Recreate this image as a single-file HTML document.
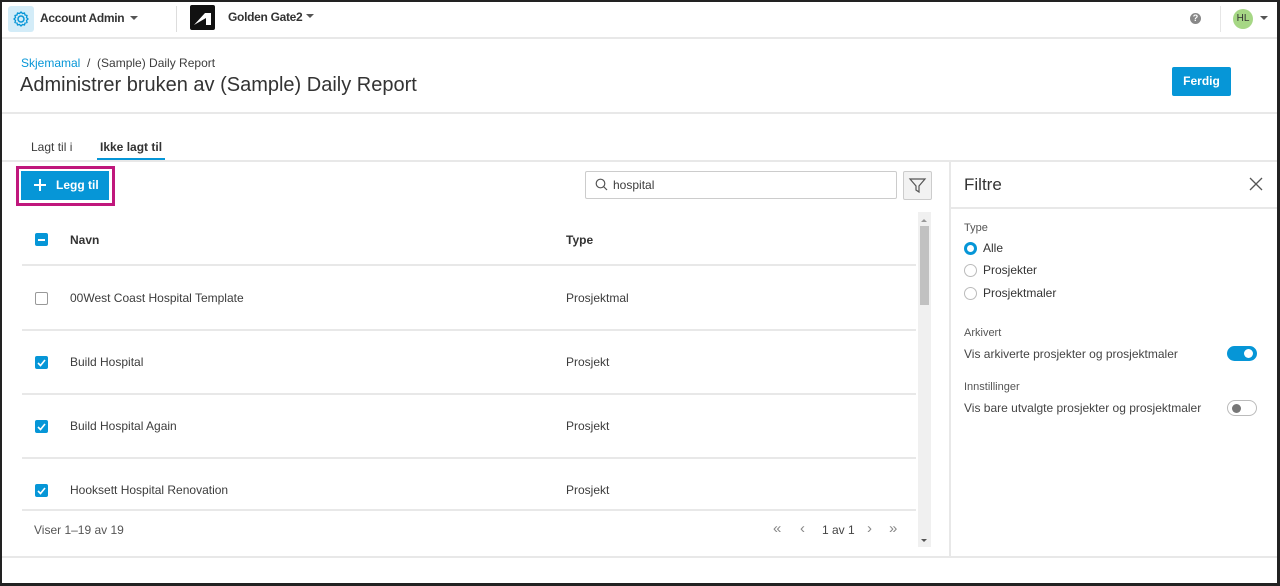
<!DOCTYPE html><html><head><style>
*{box-sizing:border-box;margin:0;padding:0}
body{width:1280px;height:586px;overflow:hidden;font-family:"Liberation Sans",sans-serif;color:#3c3c3c;background:#fff;position:relative;font-size:12px}
.a{position:absolute}
.frame{position:absolute;left:0;top:0;width:1280px;height:586px;border:2px solid #222;border-right-width:3px;border-bottom-width:3px;pointer-events:none}
.hl{position:absolute;height:2px;background:#e8e8e8}
.cb{position:absolute;width:13px;height:13px;border-radius:2px}
.on{background:#0696d7}
.off{border:1px solid #999;background:#fff}
.row{position:absolute;left:70px;font-size:12px;color:#3c3c3c}
</style></head><body>
<div class="a" style="left:8px;top:6px;width:26px;height:26px;background:#d3ecf8;border-radius:3px"></div>
<svg class="a" style="left:12px;top:10px" width="18" height="18" viewBox="0 0 18 18"><circle cx="9" cy="9" r="3" fill="none" stroke="#0696d7" stroke-width="1.5"/><path d="M9 2l1.5 1.5 2-.5.5 2 2 .5-.5 2L16 9l-1.5 1.5.5 2-2 .5-.5 2-2-.5L9 16l-1.5-1.5-2 .5-.5-2-2-.5.5-2L2 9l1.5-1.5-.5-2 2-.5.5-2 2 .5z" fill="none" stroke="#0696d7" stroke-width="1.3"/></svg>
<div class="a" style="left:40px;top:11px;font-size:12px;font-weight:bold;color:#333;letter-spacing:-0.3px">Account Admin</div>
<div class="a" style="left:130px;top:16px;border:4px solid transparent;border-top:4px solid #555"></div>
<div class="a" style="left:176px;top:6px;width:1px;height:26px;background:#ddd"></div>
<div class="a" style="left:190px;top:5px;width:25px;height:25px;background:#111;border-radius:2px"></div>
<svg class="a" style="left:190px;top:5px" width="25" height="25"><path d="M4 20L15 8h6v12h-5v-7z" fill="#fff"/></svg>
<div class="a" style="left:228px;top:10px;font-size:12px;font-weight:bold;color:#333;letter-spacing:-0.3px">Golden Gate2</div>
<div class="a" style="left:306px;top:14px;border:4px solid transparent;border-top:4px solid #555"></div>
<div class="a" style="left:1190px;top:13px;width:11px;height:11px;border-radius:50%;background:#888;color:#fff;font-size:9px;font-weight:bold;text-align:center;line-height:11px">?</div>
<div class="a" style="left:1220px;top:6px;width:1px;height:26px;background:#e6e6e6"></div>
<div class="a" style="left:1233px;top:9px;width:20px;height:20px;border-radius:50%;background:#a6d785;font-size:10px;text-align:center;line-height:20px;color:#333">HL</div>
<div class="a" style="left:1260px;top:16px;border:4px solid transparent;border-top:4px solid #555"></div>
<div class="hl" style="left:0;top:37px;width:1280px"></div>
<div class="a" style="left:21px;top:56px;font-size:12px"><span style="color:#0696d7">Skjemamal</span> &nbsp;/&nbsp; (Sample) Daily Report</div>
<div class="a" style="left:20px;top:74px;font-size:20px;color:#333">Administrer bruken av (Sample) Daily Report</div>
<div class="a" style="left:1172px;top:67px;width:59px;height:29px;background:#0696d7;border-radius:2px;color:#fff;font-weight:bold;font-size:12px;text-align:center;line-height:29px">Ferdig</div>
<div class="hl" style="left:0;top:112px;width:1280px"></div>
<div class="a" style="left:31px;top:140px;font-size:12px">Lagt til i</div>
<div class="a" style="left:100px;top:140px;font-size:12px;font-weight:bold;color:#333">Ikke lagt til</div>
<div class="a" style="left:97px;top:158px;width:68px;height:2px;background:#0696d7"></div>
<div class="hl" style="left:0;top:160px;width:1280px"></div>
<div class="a" style="left:16px;top:166px;width:99px;height:40px;border:3px solid #c0177c"></div>
<div class="a" style="left:21px;top:171px;width:88px;height:29px;background:#0696d7;color:#fff;font-weight:bold;font-size:12px;line-height:29px;padding-left:35px">Legg til</div>
<div class="a" style="left:34px;top:184px;width:12px;height:1.5px;background:#fff"></div>
<div class="a" style="left:39.3px;top:178.5px;width:1.5px;height:12px;background:#fff"></div>
<div class="a" style="left:585px;top:171px;width:312px;height:28px;border:1px solid #ccc;border-radius:2px"></div>
<svg class="a" style="left:595px;top:178px" width="13" height="13"><circle cx="5.5" cy="5.5" r="4.3" fill="none" stroke="#555" stroke-width="1.2"/><path d="M8.5 8.5L12 12" stroke="#555" stroke-width="1.2"/></svg>
<div class="a" style="left:613px;top:178px;font-size:12px">hospital</div>
<div class="a" style="left:903px;top:171px;width:29px;height:29px;border:1px solid #ccc;background:#f2f2f2;border-radius:2px"></div>
<svg class="a" style="left:908px;top:176px" width="19" height="19"><path d="M2 3h15l-6 7v6l-3-2v-4z" fill="none" stroke="#555" stroke-width="1.2"/></svg>
<div class="cb on" style="left:35px;top:233px"></div><div class="a" style="left:38px;top:239px;width:7px;height:1.5px;background:#fff"></div>
<div class="a" style="left:70px;top:233px;font-weight:bold;color:#333">Navn</div>
<div class="a" style="left:566px;top:233px;font-weight:bold;color:#333">Type</div>
<div class="hl" style="left:22px;top:264px;width:894px"></div>
<div class="cb off" style="left:35px;top:292px"></div>
<div class="row" style="top:291px">00West Coast Hospital Template</div><div class="row" style="left:566px;top:291px">Prosjektmal</div>
<div class="hl" style="left:22px;top:329px;width:894px"></div>
<div class="cb on" style="left:35px;top:356px"></div>
<div class="row" style="top:355px">Build Hospital</div><div class="row" style="left:566px;top:355px">Prosjekt</div>
<div class="hl" style="left:22px;top:393px;width:894px"></div>
<div class="cb on" style="left:35px;top:420px"></div>
<div class="row" style="top:419px">Build Hospital Again</div><div class="row" style="left:566px;top:419px">Prosjekt</div>
<div class="hl" style="left:22px;top:457px;width:894px"></div>
<div class="cb on" style="left:35px;top:484px"></div>
<div class="row" style="top:483px">Hooksett Hospital Renovation</div><div class="row" style="left:566px;top:483px">Prosjekt</div>
<div class="hl" style="left:22px;top:509px;width:894px"></div>
<svg class="a" style="left:35px;top:356px" width="13" height="142"><g fill="none" stroke="#fff" stroke-width="1.6"><path d="M3 7l2.5 2.5L10 4"/><path d="M3 71l2.5 2.5L10 68"/><path d="M3 135l2.5 2.5L10 132"/></g></svg>
<div class="a" style="left:34px;top:523px;font-size:12px;color:#555">Viser 1–19 av 19</div>
<div class="a" style="left:773px;top:520px;font-size:15px;color:#888">«</div>
<div class="a" style="left:800px;top:520px;font-size:15px;color:#888">‹</div>
<div class="a" style="left:822px;top:523px;font-size:12px;color:#444">1 av 1</div>
<div class="a" style="left:867px;top:520px;font-size:15px;color:#888">›</div>
<div class="a" style="left:889px;top:520px;font-size:15px;color:#888">»</div>
<div class="a" style="left:918px;top:212px;width:13px;height:335px;background:#f0f0f0"></div>
<div class="a" style="left:920px;top:226px;width:9px;height:79px;background:#c1c1c1"></div>
<div class="a" style="left:921px;top:216px;border:3px solid transparent;border-bottom:3px solid #999"></div>
<div class="a" style="left:921px;top:539px;border:3px solid transparent;border-top:3px solid #555"></div>
<div class="a" style="left:949px;top:161px;width:2px;height:396px;background:#e8e8e8"></div>
<div class="a" style="left:964px;top:175px;font-size:17px;color:#333">Filtre</div>
<svg class="a" style="left:1249px;top:177px" width="14" height="14"><path d="M1 1l12 12M13 1L1 13" stroke="#555" stroke-width="1.3"/></svg>
<div class="hl" style="left:951px;top:207px;width:327px"></div>
<div class="a" style="left:964px;top:222px;font-size:11px;color:#555">Type</div>
<div class="a" style="left:964px;top:242px;width:13px;height:13px;border-radius:50%;border:3.5px solid #0696d7"></div>
<div class="a" style="left:983px;top:241px;font-size:12px;color:#333">Alle</div>
<div class="a" style="left:964px;top:264px;width:13px;height:13px;border-radius:50%;border:1px solid #bbb"></div>
<div class="a" style="left:983px;top:263px;font-size:12px;color:#333">Prosjekter</div>
<div class="a" style="left:964px;top:287px;width:13px;height:13px;border-radius:50%;border:1px solid #bbb"></div>
<div class="a" style="left:983px;top:286px;font-size:12px;color:#333">Prosjektmaler</div>
<div class="a" style="left:964px;top:327px;font-size:11px;color:#555">Arkivert</div>
<div class="a" style="left:964px;top:347px;font-size:12px;color:#444">Vis arkiverte prosjekter og prosjektmaler</div>
<div class="a" style="left:1227px;top:346px;width:30px;height:15px;border-radius:8px;background:#0696d7"></div>
<div class="a" style="left:1244px;top:349px;width:9px;height:9px;border-radius:50%;background:#fff"></div>
<div class="a" style="left:964px;top:381px;font-size:11px;color:#555">Innstillinger</div>
<div class="a" style="left:964px;top:401px;font-size:12px;color:#444">Vis bare utvalgte prosjekter og prosjektmaler</div>
<div class="a" style="left:1227px;top:400px;width:30px;height:16px;border-radius:8px;border:1px solid #bbb"></div>
<div class="a" style="left:1232px;top:404px;width:9px;height:9px;border-radius:50%;background:#777"></div>
<div class="hl" style="left:0;top:556px;width:1280px"></div>
<div class="frame"></div>
</body></html>
